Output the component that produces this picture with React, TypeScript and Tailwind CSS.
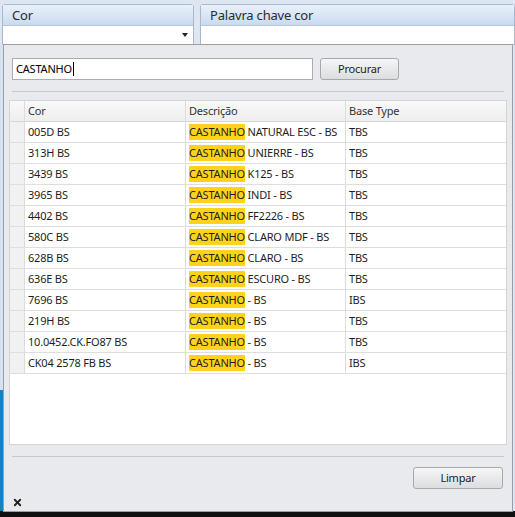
import { X } from 'lucide-react'

const ROWS = [
  { cor: '005D BS', rest: ' NATURAL ESC - BS', base: 'TBS' },
  { cor: '313H BS', rest: ' UNIERRE - BS', base: 'TBS' },
  { cor: '3439 BS', rest: ' K125 - BS', base: 'TBS' },
  { cor: '3965 BS', rest: ' INDI - BS', base: 'TBS' },
  { cor: '4402 BS', rest: ' FF2226 - BS', base: 'TBS' },
  { cor: '580C BS', rest: ' CLARO MDF - BS', base: 'TBS' },
  { cor: '628B BS', rest: ' CLARO - BS', base: 'TBS' },
  { cor: '636E BS', rest: ' ESCURO - BS', base: 'TBS' },
  { cor: '7696 BS', rest: ' - BS', base: 'IBS' },
  { cor: '219H BS', rest: ' - BS', base: 'TBS' },
  { cor: '10.0452.CK.FO87 BS', rest: ' - BS', base: 'TBS' },
  { cor: 'CK04 2578 FB BS', rest: ' - BS', base: 'IBS' },
]

function GroupBox({ label, width, combo }: { label: string; width: string; combo?: boolean }) {
  return (
    <div className={`flex flex-col rounded-t-[3px] border border-[#a9b8cc] ${width}`}>
      <div className="h-[20px] bg-gradient-to-b from-[#e9f1fa] to-[#c9dbf0] pl-[9px] pt-[2px] text-[13px] leading-[16px] text-[#2b2b2b]">
        {label}
      </div>
      <div className="flex h-[19px] items-center justify-end border-t border-[#b9c5d4] bg-white pr-[5px]">
        {combo && <span className="h-0 w-0 border-x-[3px] border-t-[4px] border-x-transparent border-t-[#222]" />}
      </div>
    </div>
  )
}

export default function App() {
  return (
    <div className="relative h-[517px] w-[515px] overflow-hidden bg-[#dde6f1] font-['Noto_Sans',sans-serif] text-[11px] tracking-[-0.2px] text-[#1e1e1e]">
      <div className="flex h-[511px] flex-col">
        <div className="flex h-[45px] gap-[6px] pl-[2px] pt-[4px]">
          <GroupBox label="Cor" width="w-[192px]" combo />
          <GroupBox label="Palavra chave cor" width="flex-1" />
        </div>
        <div className="flex flex-1 flex-col">
          <div className="h-[345px] w-[3px] bg-[#d6e2ef]" />
          <div className="w-[3px] flex-1 bg-[#1a7fc1]" />
        </div>
      </div>
      <div className="h-[6px] bg-[#101010]" />

      {/* dropdown popup */}
      <div className="absolute left-[3px] top-[44px] flex h-[468px] w-[510px] flex-col border border-[#9a9ea6] bg-[#e9eaee]">
        <div className="flex items-center gap-[7px] pl-[8px] pt-[13px]">
          <div className="flex h-[22px] w-[301px] items-center border border-[#a9acb2] bg-white pl-[3px] text-black">
            CASTANHO<span className="ml-[1px] h-[14px] w-px bg-black" />
          </div>
          <button className="h-[22px] w-[79px] rounded-[3px] border border-[#a5a8ad] bg-gradient-to-b from-[#f6f6f6] to-[#dcdde0] text-[#222]">
            Procurar
          </button>
        </div>
        <div className="mx-[8px] mt-[11px] h-px bg-[#c8c9cd]" />
        <div className="mx-[5px] mt-[8px] h-[345px] border border-[#d4d4d4] bg-white">
          <div className="flex h-[21px] border-b border-[#d7d7d7] bg-gradient-to-b from-[#f9f9f9] to-[#eeeeee] text-[#333]">
            <div className="w-[15px] border-r border-[#dcdcdc]" />
            <div className="flex w-[161px] items-center border-r border-[#dcdcdc] pl-[3px]">Cor</div>
            <div className="flex w-[160px] items-center border-r border-[#dcdcdc] pl-[3px]">Descrição</div>
            <div className="flex flex-1 items-center pl-[3px]">Base Type</div>
          </div>
          {ROWS.map((r) => (
            <div key={r.cor} className="flex h-[21px] border-b border-[#dedede]">
              <div className="w-[15px] border-r border-[#dcdcdc] bg-[#f1f1f1]" />
              <div className="flex w-[161px] items-center border-r border-[#dcdcdc] pl-[3px]">{r.cor}</div>
              <div className="flex w-[160px] items-center overflow-hidden whitespace-pre border-r border-[#dcdcdc] pl-[3px]">
                <span className="bg-[#ffd21c]">CASTANHO</span>
                {r.rest}
              </div>
              <div className="flex flex-1 items-center pl-[3px]">{r.base}</div>
            </div>
          ))}
        </div>
        <div className="mx-[8px] mt-[11px] h-px bg-[#c8c9cd]" />
        <div className="flex justify-end pr-[9px] pt-[10px]">
          <button className="h-[22px] w-[90px] rounded-[3px] border border-[#a5a8ad] bg-gradient-to-b from-[#f6f6f6] to-[#dcdde0] text-[#222]">
            Limpar
          </button>
        </div>
        <div className="mt-auto pb-[3px] pl-[8px]">
          <X size={11} strokeWidth={4} className="text-[#222]" />
        </div>
      </div>
    </div>
  )
}
